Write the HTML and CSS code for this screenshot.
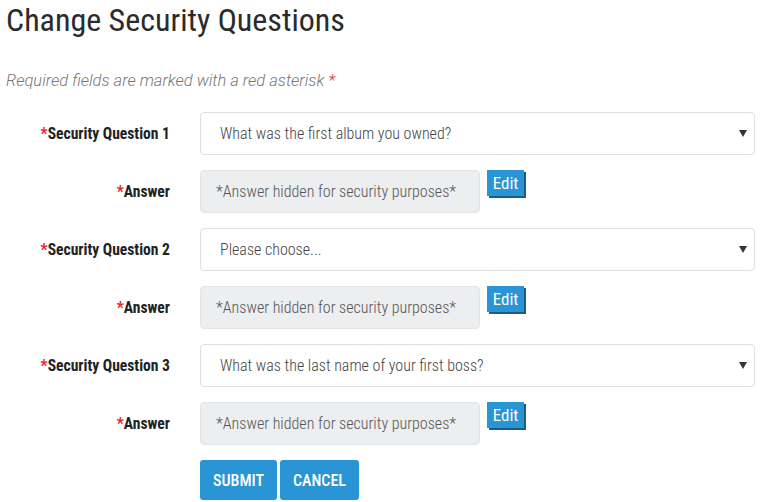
FILE: index.html
```html
<!DOCTYPE html>
<html>
<head>
<meta charset="utf-8">
<link rel="stylesheet" href="styles.css">
</head>
<body>
<div class="page">
  <h1 class="title">Change Security Questions</h1>
  <p class="note">Required fields are marked with a red asterisk <span class="req">*</span></p>
  <form class="form">
    <div class="row">
      <label class="label"><span class="req">*</span>Security Question 1</label>
      <div class="select"><span>What was the first album you owned?</span><span class="caret"></span></div>
    </div>
    <div class="row">
      <label class="label"><span class="req">*</span>Answer</label>
      <div class="answer-wrap"><div class="answer">*Answer hidden for security purposes*</div><button type="button" class="edit">Edit</button></div>
    </div>
    <div class="row">
      <label class="label"><span class="req">*</span>Security Question 2</label>
      <div class="select"><span>Please choose...</span><span class="caret"></span></div>
    </div>
    <div class="row">
      <label class="label"><span class="req">*</span>Answer</label>
      <div class="answer-wrap"><div class="answer">*Answer hidden for security purposes*</div><button type="button" class="edit">Edit</button></div>
    </div>
    <div class="row">
      <label class="label"><span class="req">*</span>Security Question 3</label>
      <div class="select"><span>What was the last name of your first boss?</span><span class="caret"></span></div>
    </div>
    <div class="row">
      <label class="label"><span class="req">*</span>Answer</label>
      <div class="answer-wrap"><div class="answer">*Answer hidden for security purposes*</div><button type="button" class="edit">Edit</button></div>
    </div>
    <div class="row">
      <span></span>
      <div class="actions"><button type="button" class="btn">SUBMIT</button><button type="button" class="btn">CANCEL</button></div>
    </div>
  </form>
</div>
</body>
</html>
```
FILE: styles.css
```css
* { box-sizing: border-box; }
body {
  margin: 0;
  font-family: "Roboto Condensed", Roboto, "Liberation Sans", sans-serif;
  color: #333;
  background: #fff;
}
.page { padding: 0 6px; }
.title {
  margin: 0;
  padding-top: 2px;
  font-size: 32px;
  font-weight: 400;
  line-height: 36px;
  color: #2b2b2b;
}
.note {
  margin: 33px 0 0;
  font-family: Roboto, "Liberation Sans", sans-serif;
  font-size: 16.5px;
  font-style: italic;
  font-weight: 300;
  color: #777;
  line-height: 20px;
}
.req { color: #e3262b; font-style: normal; }
.note .req { font-style: italic; }
.form {
  margin-top: 21px;
  display: grid;
  row-gap: 15px;
}
.row {
  display: grid;
  grid-template-columns: 164px 555px;
  column-gap: 30px;
  align-items: start;
}
.label {
  text-align: right;
  font-weight: 700;
  font-size: 15.6px;
  line-height: 20px;
  padding-top: 12px;
  color: #222;
}
.select {
  height: 43px;
  border: 1px solid #dcdfe1;
  border-radius: 4px;
  display: flex;
  align-items: center;
  justify-content: space-between;
  padding: 0 7px 0 19px;
  font-size: 16px;
  font-weight: 300;
  color: #444;
}
.caret {
  width: 0; height: 0;
  border-left: 4px solid transparent;
  border-right: 4px solid transparent;
  border-top: 7px solid #333;
}
.answer-wrap { display: flex; align-items: flex-start; gap: 7px; }
.answer {
  width: 280px;
  height: 43px;
  background: #eceeef;
  border: 1px solid #e2e5e7;
  border-radius: 4px;
  display: flex;
  align-items: center;
  padding-left: 15px;
  font-size: 16px;
  font-weight: 300;
  color: #555;
}
.edit {
  margin-top: 0;
  height: 26px;
  width: 37px;
  padding: 0;
  border: 0;
  border-radius: 0;
  background: #2a95d4;
  box-shadow: 2px 2px 0 #1b5b85;
  color: #fff;
  font-family: inherit;
  font-size: 17px;
  line-height: 26px;
}
.actions { display: flex; gap: 3px; }
.btn {
  height: 40px;
  padding: 0 13px;
  border: 0;
  border-radius: 3px;
  background: #2a95d4;
  color: #fff;
  font-family: inherit;
  font-size: 16px;
  font-weight: 500;
}
```
